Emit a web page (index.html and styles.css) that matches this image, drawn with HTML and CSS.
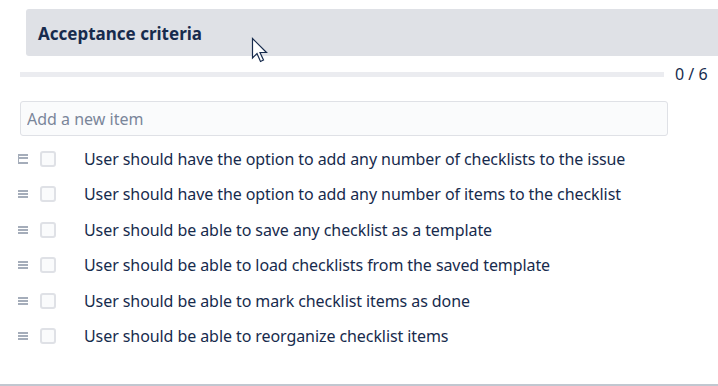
FILE: index.html
```html
<!DOCTYPE html>
<html lang="en">
<head>
    <meta charset="UTF-8">
    <title>Acceptance criteria</title>
    <link rel="stylesheet" href="styles.css">
</head>
<body>
    <div class="panel">
        <div class="header">
            <h2>Acceptance criteria</h2>
            <!-- mouse pointer -->
            <svg class="cursor" width="20" height="28" viewBox="0 0 20 28">
                <path d="M1.5 1.5 L1.5 21 L6 16.5 L9.5 24.5 L12.5 23 L9 15.5 L15.5 15.5 Z" fill="#fff" stroke="#172b4d" stroke-width="1.2" stroke-linejoin="miter"/>
            </svg>
        </div>

        <div class="progress-row">
            <div class="progress"><div class="progress-fill" style="width: 0%"></div></div>
            <span class="count">0 / 6</span>
        </div>

        <input class="new-item" type="text" placeholder="Add a new item">

        <ul class="checklist">
            <li class="item">
                <span class="handle handle-active"></span>
                <span class="box"></span>
                <span class="label">User should have the option to add any number of checklists to the issue</span>
            </li>
            <li class="item">
                <span class="handle"></span>
                <span class="box"></span>
                <span class="label">User should have the option to add any number of items to the checklist</span>
            </li>
            <li class="item">
                <span class="handle"></span>
                <span class="box"></span>
                <span class="label">User should be able to save any checklist as a template</span>
            </li>
            <li class="item">
                <span class="handle"></span>
                <span class="box"></span>
                <span class="label">User should be able to load checklists from the saved template</span>
            </li>
            <li class="item">
                <span class="handle"></span>
                <span class="box"></span>
                <span class="label">User should be able to mark checklist items as done</span>
            </li>
            <li class="item">
                <span class="handle"></span>
                <span class="box"></span>
                <span class="label">User should be able to reorganize checklist items</span>
            </li>
        </ul>
    </div>
    <div class="bottom-line"></div>
</body>
</html>
```

FILE: styles.css
```css
* {
    box-sizing: border-box;
    margin: 0;
    padding: 0;
}
body {
    font-family: "Noto Sans", "Open Sans", sans-serif;
    color: #172b4d;
    background: #ffffff;
    width: 718px;
    height: 386px;
    overflow: hidden;
    display: flex;
    flex-direction: column;
}
.panel {
    flex: 1;
    padding: 9px 0 0 20px;
}
.header {
    position: relative;
    margin-left: 6px;
    height: 47px;
    background-color: #dfe1e6;
    border-radius: 3px 0 0 3px;
    padding: 0 12px;
    display: flex;
    align-items: center;
}
h2 {
    font-size: 17px;
    font-weight: 700;
    margin-top: 2px;
}
.cursor {
    position: absolute;
    left: 225px;
    top: 28px;
}
.progress-row {
    display: flex;
    align-items: center;
    margin-top: 9px;
    height: 18px;
}
.progress {
    width: 644px;
    height: 5px;
    background-color: #ebecf0;
}
.progress-fill {
    height: 100%;
    background-color: #36b37e;
}
.count {
    margin-left: 11px;
    font-size: 16px;
    color: #172b4d;
}
.new-item {
    display: block;
    margin-top: 18px;
    width: 648px;
    height: 35px;
    padding: 0 6px;
    border: 1px solid #dfe1e6;
    border-radius: 3px;
    background-color: #fafbfc;
    font-family: inherit;
    font-size: 16px;
    color: #172b4d;
}
.new-item::placeholder {
    color: #7a869a;
}
.checklist {
    list-style: none;
    margin-top: 5px;
}
.item {
    display: flex;
    align-items: center;
    height: 35.5px;
}
.handle {
    width: 10px;
    height: 8px;
    margin-left: -2px;
    border-top: 2px solid #a5adba;
    border-bottom: 2px solid #a5adba;
    position: relative;
}
.handle::after {
    content: "";
    position: absolute;
    left: 0;
    right: 0;
    top: 1px;
    height: 2px;
    background: #a5adba;
}
.handle-active {
    border-left: 1px solid #a5adba;
    height: 10px;
}
.box {
    width: 16px;
    height: 16px;
    margin-left: 12px;
    border: 2px solid #dfe1e6;
    border-radius: 3px;
    background-color: #fafbfc;
}
.label {
    margin-left: 28px;
    font-size: 16px;
    letter-spacing: -0.08px;
}
.bottom-line {
    height: 2px;
    background-color: #c1c7d0;
}
```
